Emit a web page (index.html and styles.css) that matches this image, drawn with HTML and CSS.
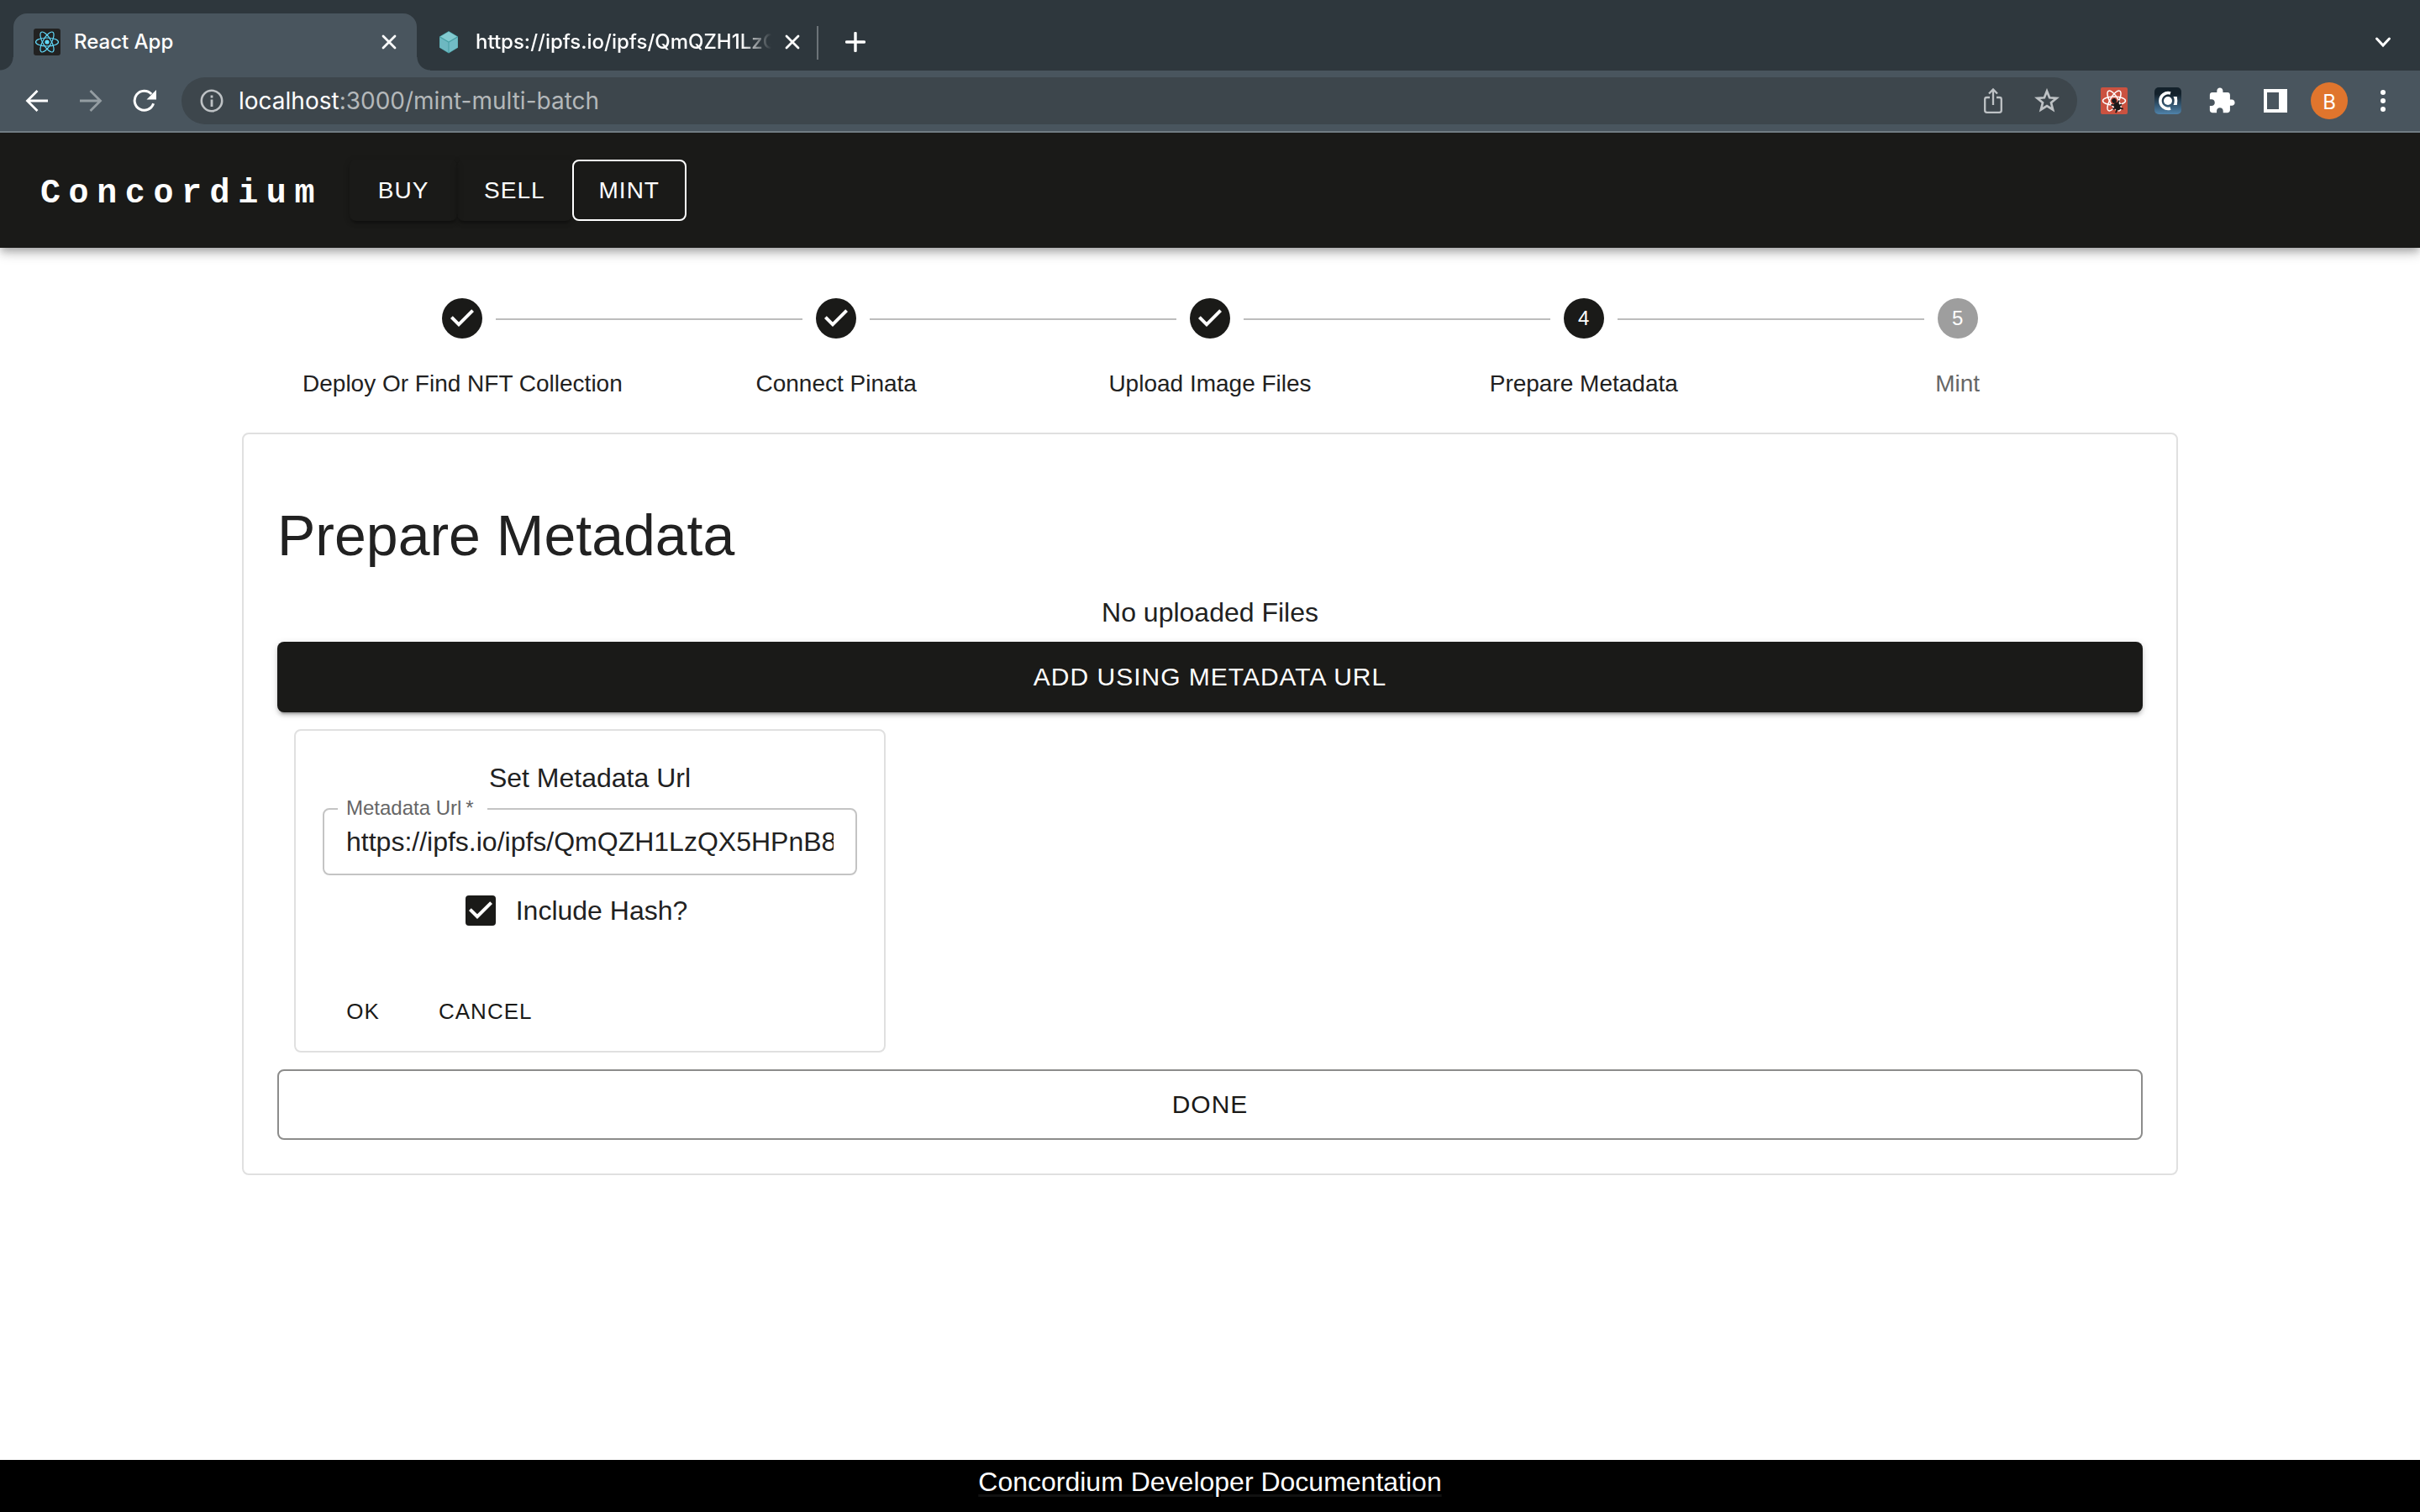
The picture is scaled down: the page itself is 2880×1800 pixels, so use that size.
FILE: index.html
```html
<!DOCTYPE html>
<html lang="en">
<head>
<meta charset="utf-8">
<title>React App</title>
<link rel="stylesheet" href="styles.css">
</head>
<body>
<div class="browser">
  <div class="tabstrip">
    <div class="tab tab-active">
      <svg class="favicon" viewBox="0 0 32 32" aria-hidden="true"><rect width="32" height="32" rx="3" fill="#222"/><g fill="none" stroke="#61dafb" stroke-width="1.2"><ellipse cx="16" cy="16" rx="13.5" ry="5"/><ellipse cx="16" cy="16" rx="13.5" ry="5" transform="rotate(60 16 16)"/><ellipse cx="16" cy="16" rx="13.5" ry="5" transform="rotate(120 16 16)"/></g><circle cx="16" cy="16" r="2.6" fill="#61dafb"/></svg>
      <span class="tab-title">React App</span>
      <button class="tab-close" aria-label="Close tab"><svg viewBox="0 0 18 18" width="18" height="18"><path d="M2 2l14 14M16 2L2 16" stroke="#fff" stroke-width="2.8" stroke-linecap="round"/></svg></button>
    </div>
    <div class="tab">
      <svg class="favicon" viewBox="0 0 32 32" aria-hidden="true"><path d="M16 3l11 6.500v13.300L16 29.500 5 22.800V9.500z" fill="#469ea2"/><path d="M16 3.800l10 5.800-10 5.900-10-5.900z" fill="#83cad0"/><path d="M5.300 10.600l10.200 6v12L5.300 22.600z" fill="#6db8c1"/><path d="M26.700 10.600l-10.200 6v12l10.200-6z" fill="#72bcc6"/></svg>
      <span class="tab-title tab-title-fade">https://ipfs.io/ipfs/QmQZH1LzQ</span>
      <button class="tab-close" aria-label="Close tab"><svg viewBox="0 0 18 18" width="18" height="18"><path d="M2 2l14 14M16 2L2 16" stroke="#fff" stroke-width="2.800" stroke-linecap="round"/></svg></button>
    </div>
    <button class="new-tab" aria-label="New tab"><svg viewBox="0 0 24 24" width="24" height="24"><path d="M12 1.500v21M1.500 12h21" stroke="#fff" stroke-width="3.400" stroke-linecap="round"/></svg></button>
    <button class="tool tab-search" aria-label="Search tabs"><svg viewBox="0 0 20 14" width="20" height="14"><path d="M2.500 3l7.500 8 7.500-8" fill="none" stroke="#fff" stroke-width="3" stroke-linecap="round"/></svg></button>
  </div>
  <div class="toolbar">
    <div class="tools">
      <button class="tool" aria-label="Back"><svg viewBox="0 0 28 28" width="28" height="28"><path d="M27 14H3M14.500 2L2.500 14l12 12" fill="none" stroke="#fff" stroke-width="2.800"/></svg></button>
      <button class="tool" aria-label="Forward"><svg viewBox="0 0 28 28" width="28" height="28"><path d="M1 14h24M13.500 2l12 12-12 12" fill="none" stroke="#949da2" stroke-width="2.800"/></svg></button>
      <button class="tool" aria-label="Reload"><svg viewBox="0 0 28 28" width="28" height="28"><path d="M24.600 17.300A11.500 11.500 0 1 1 22.200 6" fill="none" stroke="#fff" stroke-width="3"/><path d="M28 1v11.500H16.500z" fill="#fff"/></svg></button>
    </div>
    <div class="omnibox">
      <svg viewBox="0 0 28 28" width="28" height="28" aria-hidden="true"><circle cx="14" cy="14" r="12.200" fill="none" stroke="#bec2c5" stroke-width="2.600"/><path d="M14 12.500v8.500M14 7.500v3" stroke="#bec2c5" stroke-width="2.800"/></svg>
      <div class="address"><span class="address-host">localhost</span>:3000/mint-multi-batch</div>
      <button class="tool" aria-label="Share"><svg viewBox="0 0 24 32" width="24" height="32"><path d="M8 12H4.500Q2.200 12 2.200 14.300v13.200q0 2.300 2.300 2.300h15q2.300 0 2.300-2.300V14.300Q21.800 12 19.500 12H16M12 21V3M7 7.500l5-5 5 5" fill="none" stroke="#bec2c5" stroke-width="2.300"/></svg></button>
      <button class="tool" aria-label="Bookmark this tab"><svg viewBox="0 0 30 30" width="30" height="30"><path d="M15 3.500l3.100 7.800 8.400.6-6.500 5.400 2.100 8.200-7.100-4.500-7.100 4.500 2.100-8.200-6.500-5.400 8.400-.6z" fill="none" stroke="#bec2c5" stroke-width="2.700"/></svg></button>
    </div>
    <div class="tools">
      <button class="tool" aria-label="React Developer Tools"><svg viewBox="0 0 32 32" width="32" height="32"><rect width="32" height="32" rx="2" fill="#cb5240"/><g fill="none" stroke="#fff" stroke-width="1.500"><ellipse cx="16" cy="16" rx="13.500" ry="5"/><ellipse cx="16" cy="16" rx="13.500" ry="5" transform="rotate(60 16 16)"/><ellipse cx="16" cy="16" rx="13.500" ry="5" transform="rotate(120 16 16)"/></g><g transform="rotate(-28 16 16)" fill="#1c1a1a"><circle cx="16" cy="16" r="2.800"/><ellipse cx="16" cy="23.500" rx="3.700" ry="5"/><path d="M10.500 18.500l4 2.500M21.500 18.500l-4 2.500M10 24h12M11 29.500l3.500-3M21 29.500l-3.500-3" stroke="#1c1a1a" stroke-width="1.800"/></g></svg></button>
      <button class="tool" aria-label="Concordium Wallet"><svg viewBox="0 0 32 32" width="32" height="32"><defs><linearGradient id="wallet" x1="0" y1="0" x2="0" y2="1"><stop offset=".25" stop-color="#13212b"/><stop offset="1" stop-color="#4f83ab"/></linearGradient></defs><rect width="32" height="32" rx="5" fill="url(#wallet)"/><path d="M19 7A9.400 9.400 0 1 0 19 25" fill="none" stroke="#fff" stroke-width="3.600"/><circle cx="16" cy="16" r="5" fill="#fff"/><path d="M22.500 11h4.300q1 5 0 10h-4.300q2.400-5 0-10z" fill="#fff"/></svg></button>
      <button class="tool" aria-label="Extensions"><svg viewBox="0 0 24 24" width="34" height="34"><path fill="#fff" d="M20.500 11H19V7c0-1.100-.9-2-2-2h-4V3.500C13 2.120 11.880 1 10.500 1S8 2.120 8 3.500V5H4c-1.100 0-1.990.9-1.990 2v3.800H3.500c1.490 0 2.700 1.210 2.700 2.700s-1.210 2.700-2.700 2.700H2V20c0 1.100.9 2 2 2h3.800v-1.500c0-1.490 1.210-2.700 2.700-2.700 1.490 0 2.700 1.210 2.700 2.700V22H17c1.100 0 2-.9 2-2v-4h1.500c1.380 0 2.500-1.120 2.500-2.500S21.880 11 20.500 11z"/></svg></button>
      <button class="tool" aria-label="Side panel"><svg viewBox="0 0 28 28" width="28" height="28"><path fill="#fff" fill-rule="evenodd" d="M0 0h28v28H0zM4 4v20h14V4z"/></svg></button>
      <button class="tool" aria-label="Profile"><span class="avatar">B</span></button>
      <button class="tool" aria-label="Menu"><svg viewBox="0 0 8 28" width="8" height="28" fill="#fff"><circle cx="4" cy="4" r="3"/><circle cx="4" cy="14" r="3"/><circle cx="4" cy="24" r="3"/></svg></button>
    </div>
  </div>
</div>

<header class="appbar">
  <a class="brand" href="#">Concordium</a>
  <nav class="nav">
    <button class="btn btn-nav">BUY</button>
    <button class="btn btn-nav">SELL</button>
    <button class="btn btn-nav btn-current">MINT</button>
  </nav>
</header>

<main class="content">
  <ol class="stepper">
    <li class="step"><span class="step-dot"><svg viewBox="0 0 24 24" width="48" height="48"><path fill="#fff" d="M10 17l-5-5 1.400-1.400 3.600 3.600 7.600-7.600L19 8l-9 9z"/></svg></span><span class="step-label">Deploy Or Find NFT Collection</span></li>
    <li class="step"><span class="step-dot"><svg viewBox="0 0 24 24" width="48" height="48"><path fill="#fff" d="M10 17l-5-5 1.400-1.400 3.600 3.600 7.600-7.600L19 8l-9 9z"/></svg></span><span class="step-label">Connect Pinata</span></li>
    <li class="step"><span class="step-dot"><svg viewBox="0 0 24 24" width="48" height="48"><path fill="#fff" d="M10 17l-5-5 1.400-1.400 3.600 3.600 7.600-7.600L19 8l-9 9z"/></svg></span><span class="step-label">Upload Image Files</span></li>
    <li class="step"><span class="step-dot">4</span><span class="step-label">Prepare Metadata</span></li>
    <li class="step step-pending"><span class="step-dot">5</span><span class="step-label">Mint</span></li>
  </ol>

  <section class="card">
    <h1 class="title">Prepare Metadata</h1>
    <p class="status">No uploaded Files</p>
    <button class="btn btn-large btn-contained">ADD USING METADATA URL</button>
    <form class="url-card">
      <h2 class="url-title">Set Metadata Url</h2>
      <div class="field">
        <label class="field-label" for="metadata-url">Metadata Url&thinsp;*</label>
        <input class="field-input" id="metadata-url" type="text" value="https://ipfs.io/ipfs/QmQZH1LzQX5HPnB8">
      </div>
      <label class="check">
        <span class="check-box">
          <input class="check-input" type="checkbox" checked>
          <svg class="check-mark" viewBox="3 3 18 18" width="36" height="36" aria-hidden="true"><path fill="#fff" d="M10 17l-5-5 1.410-1.410L10 14.170l7.590-7.590L19 8l-9 9z"/></svg>
        </span>
        Include Hash?
      </label>
      <div class="actions">
        <button class="btn btn-small" type="button">OK</button>
        <button class="btn btn-small" type="button">CANCEL</button>
      </div>
    </form>
    <button class="btn btn-large btn-outlined">DONE</button>
  </section>
</main>

<footer class="footer"><a class="footer-link" href="#">Concordium Developer Documentation</a></footer>
</body>
</html>
```
FILE: styles.css
```css
:root {
  --ink: #1a1a18;
  --text: #212121;
  --strip: #2e373d;
  --bar: #49555e;
  --line: #e0e0e0;
}

* { box-sizing: border-box; }

body {
  margin: 0;
  min-height: 100vh;
  display: flex;
  flex-direction: column;
  background: #fff;
  color: var(--text);
  font: 32px/48px "Liberation Sans", Arial, sans-serif;
}

button {
  margin: 0;
  padding: 0;
  border: 0;
  background: none;
  color: inherit;
  font: inherit;
  cursor: pointer;
}

svg { display: block; flex: none; }
h1, h2, p, ol { margin: 0; padding: 0; font-weight: 400; }

/* Browser window frame */
.browser {
  color: #fff;
  font-family: Inter, "Noto Sans", sans-serif;
  border-bottom: 2px solid #717c83;
  background: var(--bar);
}

.tabstrip {
  display: flex;
  align-items: flex-end;
  height: 84px;
  padding: 0 12px 0 16px;
  background: var(--strip);
}

.tab {
  position: relative;
  display: flex;
  align-items: center;
  width: 478px;
  height: 68px;
  padding: 0 22px;
  gap: 16px;
  font-size: 24px;
  line-height: 32px;
  font-weight: 500;
}

.tab::after {
  content: "";
  position: absolute;
  right: 0;
  top: 15px;
  width: 2px;
  height: 40px;
  background: #6c7378;
}

.tab-active {
  width: 480px;
  padding: 0 24px;
  border-radius: 16px 16px 0 0;
  background: var(--bar);
}

.tab-active::before,
.tab-active::after {
  content: "";
  position: absolute;
  top: auto;
  bottom: 0;
  width: 16px;
  height: 16px;
}

.tab-active::before {
  left: -16px;
  background: radial-gradient(circle at 0 0, var(--strip) 15px, var(--bar) 16px);
}

.tab-active::after {
  right: -16px;
  background: radial-gradient(circle at 100% 0, var(--strip) 15px, var(--bar) 16px);
}

.favicon { width: 32px; height: 32px; }

.tab-title {
  flex: 1;
  min-width: 0;
  white-space: nowrap;
}

.tab-title-fade {
  -webkit-mask-image: linear-gradient(to left, transparent, #000 36px);
  mask-image: linear-gradient(to left, transparent, #000 36px);
}

.new-tab {
  display: grid;
  place-items: center;
  width: 88px;
  height: 68px;
}

.tools { display: flex; }

.tool {
  display: grid;
  place-items: center;
  width: 64px;
  height: 56px;
}

.tab-search {
  height: 68px;
  margin-left: auto;
}

.toolbar {
  display: flex;
  gap: 12px;
  height: 72px;
  padding: 8px 12px;
}

.omnibox {
  flex: 1;
  display: flex;
  align-items: center;
  height: 56px;
  padding: 0 4px 0 22px;
  border-radius: 28px;
  background: #3d464c;
}

.address {
  flex: 1;
  padding-left: 18px;
  color: #b4b8ba;
  font-size: 28px;
  line-height: 36px;
}

.address-host { color: #fff; }

.avatar {
  display: grid;
  place-items: center;
  width: 44px;
  height: 44px;
  border-radius: 50%;
  background: #e0752d;
  font-size: 24px;
}

/* Application bar */
.appbar {
  position: relative;
  display: flex;
  align-items: center;
  gap: 32px;
  padding: 32px 48px;
  background: var(--ink);
  color: #fff;
  box-shadow: 0 4px 8px -2px rgba(0, 0, 0, .2), 0 8px 10px rgba(0, 0, 0, .14), 0 2px 20px rgba(0, 0, 0, .12);
  clip-path: inset(0 0 -32px 0);
}

.brand {
  padding-top: 8px;
  color: #fff;
  font: 700 40px/48px "Liberation Mono", "Courier New", monospace;
  letter-spacing: .24em;
  text-decoration: none;
}

.nav { display: flex; }

.btn {
  min-width: 128px;
  border-radius: 8px;
  letter-spacing: 1px;
}

.btn-nav {
  padding: 12px 32px;
  font-size: 28px;
  line-height: 49px;
  box-shadow: 0 6px 2px -4px rgba(0, 0, 0, .2), 0 4px 4px rgba(0, 0, 0, .14), 0 2px 10px rgba(0, 0, 0, .12);
}

.btn-current {
  padding: 10px 30px;
  border: 2px solid #fff;
  box-shadow: none;
}

/* Page */
.content {
  flex: 1;
  width: 80%;
  margin: 0 auto;
  padding: 60px 0;
}

.stepper {
  display: flex;
  padding: 0 40px;
  margin-bottom: 38px;
  list-style: none;
}

.step {
  position: relative;
  flex: 1;
  display: flex;
  flex-direction: column;
  align-items: center;
  gap: 34px;
  font-size: 28px;
  line-height: 40px;
}

.step + .step::before {
  content: "";
  position: absolute;
  top: 24px;
  left: calc(-50% + 40px);
  right: calc(50% + 40px);
  height: 2px;
  background: #bdbdbd;
}

.step-dot {
  display: grid;
  place-items: center;
  width: 48px;
  height: 48px;
  border-radius: 50%;
  background: var(--ink);
  color: #fff;
  font-size: 24px;
}

.step-pending { color: #666; }
.step-pending .step-dot { background: #9e9e9e; }

.card {
  display: flex;
  flex-direction: column;
  padding: 78px 40px 40px;
  border: 2px solid var(--line);
  border-radius: 8px;
}

.title {
  margin-bottom: 26px;
  font-size: 68px;
  line-height: 84px;
}

.status {
  margin-bottom: 11px;
  text-align: center;
}

.btn-large {
  padding: 16px;
  font-size: 30px;
  line-height: 52px;
}

.btn-contained {
  background: var(--ink);
  color: #fff;
  box-shadow: 0 6px 2px -4px rgba(0, 0, 0, .2), 0 4px 4px rgba(0, 0, 0, .14), 0 2px 10px rgba(0, 0, 0, .12);
}

.btn-outlined {
  border: 2px solid #8c8c8b;
  padding: 14px;
  color: var(--ink);
}

.url-card {
  width: 100%;
  max-width: 704px;
  margin: 20px;
  padding: 32px 16px 16px;
  border: 2px solid var(--line);
  border-radius: 8px;
}

.url-title {
  font-size: 32px;
  line-height: 48px;
  text-align: center;
}

.field {
  position: relative;
  margin: 12px 16px 18px;
}

.field-label {
  position: absolute;
  top: -14px;
  left: 18px;
  padding: 0 16px 0 10px;
  background: #fff;
  color: #666;
  font-size: 24px;
  line-height: 28px;
}

.field-input {
  display: block;
  width: 100%;
  height: 80px;
  padding: 0 26px;
  border: 2px solid #c4c4c4;
  border-radius: 8px;
  background: none;
  color: var(--text);
  font: inherit;
}

.check {
  display: flex;
  justify-content: center;
  align-items: center;
  gap: 24px;
  padding-right: 32px;
}

.check-box { display: grid; }

.check-input,
.check-mark { grid-area: 1 / 1; }

.check-input {
  appearance: none;
  width: 36px;
  height: 36px;
  margin: 0;
  border-radius: 4px;
  background: var(--ink);
}

.check-mark { pointer-events: none; }

.actions {
  display: flex;
  gap: 16px;
  margin-top: 65px;
}

.btn-small {
  padding: 8px 10px;
  color: var(--ink);
  font-size: 26px;
  line-height: 46px;
}

.footer {
  height: 62px;
  padding-top: 2px;
  background: #000;
  text-align: center;
}

.footer-link {
  color: #fff;
  text-decoration-color: #111;
  text-underline-offset: 4px;
}
```
